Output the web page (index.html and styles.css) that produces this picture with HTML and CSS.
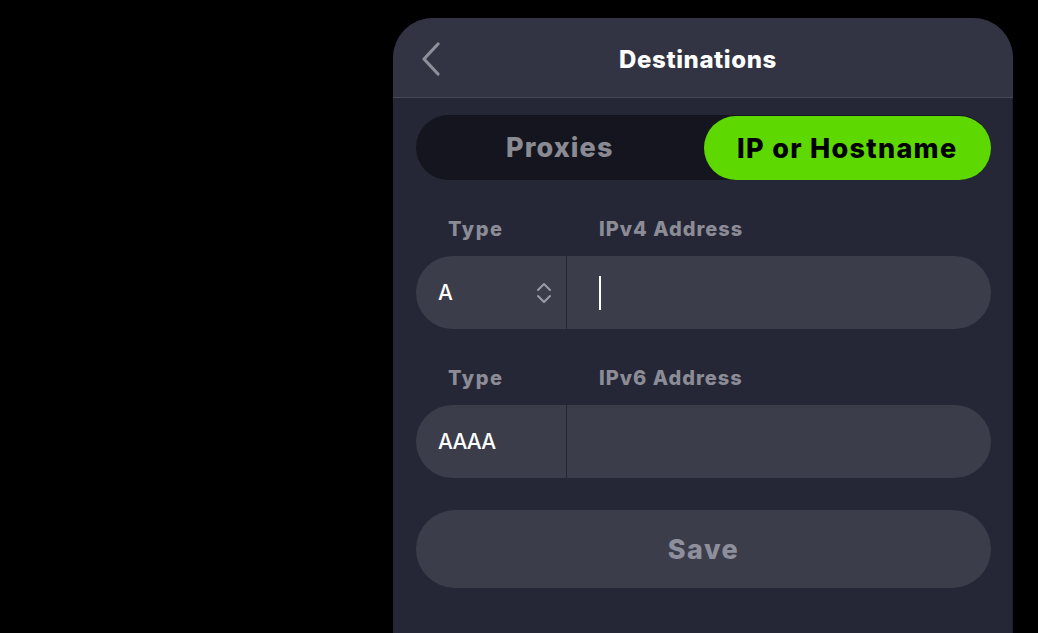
FILE: index.html
```html
<!DOCTYPE html>
<html lang="en">
<head>
<meta charset="utf-8">
<title>Destinations</title>
<link rel="stylesheet" href="styles.css">
</head>
<body>
<div class="panel">
  <header class="header">
    <button class="back" aria-label="Back">
      <svg width="20" height="34" viewBox="0 0 20 34"><path d="M17 2 L3 17 L17 32" fill="none" stroke="#8e8f98" stroke-width="3.2" stroke-linecap="round" stroke-linejoin="round"/></svg>
    </button>
    <h1 class="title">Destinations</h1>
    <span></span>
  </header>
  <main class="content">
    <div class="segment">
      <div class="seg-item">Proxies</div>
      <div class="seg-item seg-active">IP or Hostname</div>
    </div>

    <div class="field">
      <div class="labels">
        <span class="label label-type">Type</span>
        <span class="label">IPv4 Address</span>
      </div>
      <div class="inputrow">
        <div class="typecell">
          <span class="typeval">A</span>
          <svg class="updown" width="16" height="22" viewBox="0 0 16 22"><path d="M2 8 L8 2 L14 8 M2 14 L8 20 L14 14" fill="none" stroke="#9a9ba5" stroke-width="2" stroke-linecap="round" stroke-linejoin="round"/></svg>
        </div>
        <div class="addrcell"><span class="caret"></span></div>
      </div>
    </div>

    <div class="field">
      <div class="labels">
        <span class="label label-type">Type</span>
        <span class="label">IPv6 Address</span>
      </div>
      <div class="inputrow">
        <div class="typecell">
          <span class="typeval">AAAA</span>
        </div>
        <div class="addrcell"></div>
      </div>
    </div>

    <button class="save">Save</button>
  </main>
</div>
</body>
</html>
```

FILE: styles.css
```css
html, body {
  margin: 0;
  padding: 0;
  background: #000;
  height: 100%;
  overflow: hidden;
}
body {
  padding: 18px 0 0 393px;
  box-sizing: border-box;
  font-family: Inter, "Noto Sans", sans-serif;
}
.panel {
  width: 620px;
  height: 640px;
  background: #252736;
  border-radius: 40px 40px 0 0;
  overflow: hidden;
  box-shadow: inset -1px 0 0 #1c1d29;
}
.header {
  height: 79px;
  background: #323443;
  border-bottom: 1px solid #46485a;
  display: grid;
  grid-template-columns: 1fr auto 1fr;
  align-items: center;
}
.back {
  justify-self: start;
  margin-left: 28px;
  padding: 0;
  background: none;
  border: 0;
  display: flex;
  margin-top: 2px;
}
.title {
  margin: 0 10px 0 0;
  padding-top: 3px;
  color: #fff;
  font-weight: 800;
  font-size: 24px;
  letter-spacing: 0.6px;
}
.content {
  padding: 17px 22px 0 23px;
}
.segment {
  display: grid;
  grid-template-columns: 1fr 1fr;
  height: 65px;
  background: #14151f;
  border-radius: 33px;
}
.seg-item {
  display: flex;
  align-items: center;
  justify-content: center;
  font-weight: 800;
  font-size: 27px;
  letter-spacing: 1.1px;
  color: #8a8a93;
  border-radius: 33px;
}
.seg-active {
  background: #5dd901;
  color: #000;
  margin-top: 1px;
  letter-spacing: 1.3px;
}
.field {
  margin-top: 37px;
}
.labels {
  display: grid;
  grid-template-columns: 151px 1fr;
  height: 24px;
  align-items: center;
  margin-bottom: 15px;
}
.label {
  font-weight: 800;
  font-size: 20px;
  letter-spacing: 1px;
  color: #8b8c96;
  padding-left: 32px;
}
.label-type {
  letter-spacing: 1.5px;
}
.inputrow {
  display: grid;
  grid-template-columns: 151px 1fr;
  height: 73px;
  background: #3b3d4b;
  border-radius: 37px;
}
.typecell {
  display: flex;
  align-items: center;
  justify-content: space-between;
  padding: 0 14px 0 22px;
  border-right: 1px solid #242634;
}
.typeval {
  color: #fff;
  font-size: 21px;
  font-weight: 500;
  letter-spacing: -0.8px;
}
.updown {
  margin-top: 1px;
}
.addrcell {
  display: flex;
  align-items: center;
  padding-left: 32px;
}
.caret {
  width: 2px;
  height: 34px;
  background: #fff;
  margin-top: 1px;
}
.save {
  display: block;
  width: 100%;
  height: 78px;
  margin-top: 32px;
  border: 0;
  border-radius: 39px;
  background: #3b3d4b;
  color: #8e8f9c;
  font-family: Inter, "Noto Sans", sans-serif;
  font-weight: 800;
  font-size: 27px;
  letter-spacing: 1.5px;
}
```
